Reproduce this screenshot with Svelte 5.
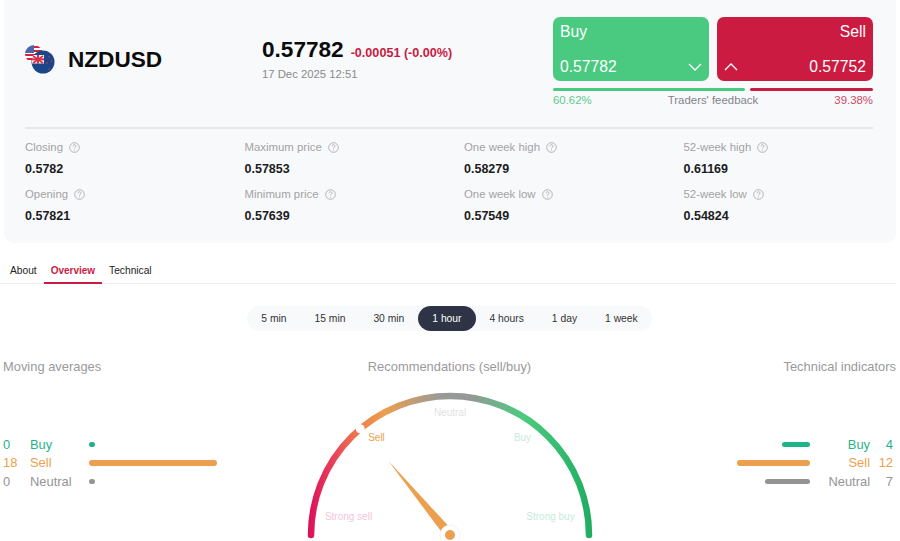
<script lang="ts">
  const stats = [
    { label: "Closing", value: "0.5782" },
    { label: "Maximum price", value: "0.57853" },
    { label: "One week high", value: "0.58279" },
    { label: "52-week high", value: "0.61169" },
    { label: "Opening", value: "0.57821" },
    { label: "Minimum price", value: "0.57639" },
    { label: "One week low", value: "0.57549" },
    { label: "52-week low", value: "0.54824" },
  ];
  const tabs = ["About", "Overview", "Technical"];
  const periods = ["5 min", "15 min", "30 min", "1 hour", "4 hours", "1 day", "1 week"];
  const averages = [
    { key: "buy", label: "Buy", count: 0, width: 6 },
    { key: "sell", label: "Sell", count: 18, width: 128 },
    { key: "neutral", label: "Neutral", count: 0, width: 6 },
  ];
  const indicators = [
    { key: "buy", label: "Buy", count: 4, width: 28 },
    { key: "sell", label: "Sell", count: 12, width: 73 },
    { key: "neutral", label: "Neutral", count: 7, width: 45 },
  ];
</script>

<div class="page">
  <section class="card">
    <div class="head">
      <div class="symbol">
        <svg class="flag" width="30" height="30" viewBox="0 0 30 30" aria-hidden="true">
          <defs>
            <clipPath id="us-clip"><circle cx="9" cy="9" r="9" /></clipPath>
            <clipPath id="nz-clip"><circle cx="18" cy="17" r="11.5" /></clipPath>
          </defs>
          <g clip-path="url(#us-clip)">
            <rect width="18" height="18" fill="#fff" />
            <rect x="8" y="1" width="10" height="2" fill="#d8203a" />
            <rect x="8" y="5" width="10" height="2" fill="#d8203a" />
            <rect y="9" width="18" height="2" fill="#d8203a" />
            <rect y="13" width="18" height="2" fill="#d8203a" />
            <rect width="9" height="8" fill="#4a66ad" />
          </g>
          <g clip-path="url(#nz-clip)">
            <rect x="6" y="5" width="24" height="24" fill="#1b4788" />
            <rect x="7" y="10" width="12" height="8.5" fill="#f4f4f6" />
            <path d="M8 11l10 7M18 11L8 18" stroke="#d8304a" stroke-width="1.6" />
            <rect x="12" y="10" width="2" height="8.5" fill="#d8304a" />
            <rect x="7" y="13.3" width="12" height="2" fill="#d8304a" />
            <circle cx="24" cy="12" r="0.8" fill="#d8304a" />
            <circle cx="26.5" cy="16" r="0.8" fill="#d8304a" />
            <circle cx="22" cy="18" r="0.8" fill="#d8304a" />
            <circle cx="24" cy="24" r="0.8" fill="#d8304a" />
          </g>
        </svg>
        <span class="symbol-name">NZDUSD</span>
      </div>

      <div class="quote">
        <div class="quote-line">
          <span class="quote-price">0.57782</span>
          <span class="quote-change">-0.00051 (-0.00%)</span>
        </div>
        <div class="quote-date">17 Dec 2025 12:51</div>
      </div>

      <div class="trade">
        <div class="trade-buttons">
          <button type="button" class="trade-btn buy">
            <span class="trade-name">Buy</span>
            <span class="trade-row">
              <span>0.57782</span>
              <svg width="14" height="8" viewBox="0 0 14 8" aria-hidden="true">
                <path d="M1 1l6 6 6-6" fill="none" stroke="#fff" stroke-width="1.3" />
              </svg>
            </span>
          </button>
          <button type="button" class="trade-btn sell">
            <span class="trade-name">Sell</span>
            <span class="trade-row">
              <svg width="14" height="8" viewBox="0 0 14 8" aria-hidden="true">
                <path d="M1 7l6-6 6 6" fill="none" stroke="#fff" stroke-width="1.3" />
              </svg>
              <span>0.57752</span>
            </span>
          </button>
        </div>
        <div class="feedback-bars">
          <span class="feedback-buy"></span>
          <span class="feedback-sell"></span>
        </div>
        <div class="feedback-labels">
          <span class="pct-buy">60.62%</span>
          <span class="feedback-title">Traders' feedback</span>
          <span class="pct-sell">39.38%</span>
        </div>
      </div>
    </div>

    <div class="stats">
      {#each stats as stat (stat.label)}
        <div class="stat">
          <div class="stat-label">
            {stat.label}
            <svg width="11" height="11" viewBox="0 0 11 11" aria-hidden="true">
              <circle cx="5.5" cy="5.5" r="4.8" fill="none" stroke="#a3a3a3" stroke-width="0.8" />
              <path d="M4 4.3c0-2 3-2 3-.2 0 1.1-1.5 1.2-1.5 2.5" fill="none" stroke="#a3a3a3" stroke-width="0.8" />
              <circle cx="5.5" cy="8" r="0.5" fill="#a3a3a3" />
            </svg>
          </div>
          <div class="stat-value">{stat.value}</div>
        </div>
      {/each}
    </div>
  </section>

  <nav class="tabs">
    {#each tabs as tab (tab)}
      <span class="tab" class:active={tab === "Overview"}>{tab}</span>
    {/each}
  </nav>

  <div class="periods-wrap">
    <div class="periods">
      {#each periods as period (period)}
        <span class="period" class:active={period === "1 hour"}>{period}</span>
      {/each}
    </div>
  </div>

  <section class="analysis">
    <div class="side">
      <h3 class="side-title">Moving averages</h3>
      <div class="rows">
        {#each averages as row (row.key)}
          <div class="row left {row.key}">
            <span class="row-count">{row.count}</span>
            <span class="row-label">{row.label}</span>
            <span class="row-bar" style="width: {row.width}px"></span>
          </div>
        {/each}
      </div>
    </div>

    <div class="center">
      <h3 class="side-title">Recommendations (sell/buy)</h3>
      <svg class="gauge" width="300" height="153" viewBox="0 0 300 153" role="img" aria-label="Recommendation gauge">
        <defs>
          <linearGradient id="gauge-arc" gradientUnits="userSpaceOnUse" x1="8" y1="0" x2="292" y2="0">
            <stop offset="0" stop-color="#dc0f5a" />
            <stop offset="0.09" stop-color="#e9415a" />
            <stop offset="0.18" stop-color="#ee7d4e" />
            <stop offset="0.27" stop-color="#ec9f4e" />
            <stop offset="0.47" stop-color="#999999" />
            <stop offset="0.57" stop-color="#959896" />
            <stop offset="0.76" stop-color="#4ccb80" />
            <stop offset="1" stop-color="#1fad5f" />
          </linearGradient>
        </defs>
        <path
          d="M11 147 A139 139 0 0 1 289 147"
          fill="none"
          stroke="url(#gauge-arc)"
          stroke-width="6.5"
          stroke-linecap="round"
        />
        <circle cx="60.2" cy="40.7" r="4.5" fill="#fff" />
        <text x="150" y="28" text-anchor="middle" class="g-label" fill="#e2e2e2">Neutral</text>
        <text x="76.5" y="53" text-anchor="middle" class="g-label" fill="#ec9f4e">Sell</text>
        <text x="222.5" y="53" text-anchor="middle" class="g-label" fill="#c8ebdf">Buy</text>
        <text x="48.5" y="132" text-anchor="middle" class="g-label" fill="#f6c5da">Strong sell</text>
        <text x="250.5" y="132" text-anchor="middle" class="g-label" fill="#c5ecdc">Strong buy</text>
        <path d="M88.5 73 L153.8 143.8 L146.2 150.2 Z" fill="#ec9f4e" />
        <circle cx="150" cy="147" r="10" fill="#fff" stroke="#eeeeee" stroke-width="0.8" />
        <circle cx="150" cy="147" r="5" fill="#ec9f4e" />
      </svg>
    </div>

    <div class="side side-right">
      <h3 class="side-title">Technical indicators</h3>
      <div class="rows">
        {#each indicators as row (row.key)}
          <div class="row right {row.key}">
            <span class="row-bar" style="width: {row.width}px"></span>
            <span class="row-label">{row.label}</span>
            <span class="row-count">{row.count}</span>
          </div>
        {/each}
      </div>
    </div>
  </section>
</div>

<style>
  :global(body) {
    margin: 0;
    background: #fff;
  }
  .page {
    height: 541px;
    overflow: hidden;
    font-family: "Liberation Sans", Arial, sans-serif;
    color: #111;
  }
  .card {
    box-sizing: border-box;
    height: 243px;
    margin: 0 4px;
    padding: 17px 23px 0 21px;
    background: #f8f9fb;
    border-radius: 0 0 10px 10px;
  }
  .head {
    display: flex;
    height: 110px;
    border-bottom: 2px solid #e6e8ea;
  }
  .symbol {
    display: flex;
    align-items: center;
    width: 237px;
    height: 86px;
    flex-shrink: 0;
  }
  .flag {
    flex-shrink: 0;
    margin-right: 13px;
  }
  .symbol-name {
    font-size: 22.6px;
    font-weight: 700;
    color: #0b0b0b;
  }
  .quote {
    width: 291px;
    flex-shrink: 0;
    padding-top: 19px;
  }
  .quote-line {
    display: flex;
    align-items: baseline;
    gap: 7px;
  }
  .quote-price {
    font-size: 22.6px;
    font-weight: 700;
    line-height: 28px;
    color: #0b0b0b;
  }
  .quote-change {
    font-size: 12.6px;
    font-weight: 700;
    color: #cb1a41;
  }
  .quote-date {
    margin-top: 3px;
    font-size: 11.3px;
    line-height: 14px;
    color: #8a8a8a;
  }
  .trade {
    width: 320px;
  }
  .trade-buttons {
    display: flex;
    gap: 8px;
  }
  .trade-btn {
    display: flex;
    flex-direction: column;
    justify-content: space-between;
    box-sizing: border-box;
    width: 156px;
    height: 64px;
    padding: 5px 7px 4px;
    border: 0;
    border-radius: 7px;
    color: #fff;
    font: inherit;
    font-size: 15.7px;
    line-height: 20px;
    cursor: pointer;
  }
  .trade-btn.buy {
    background: #4aca80;
    text-align: left;
  }
  .trade-btn.sell {
    background: #cc1b41;
    text-align: right;
  }
  .trade-row {
    display: flex;
    align-items: center;
    justify-content: space-between;
  }
  .feedback-bars {
    display: flex;
    gap: 5px;
    margin-top: 7px;
  }
  .feedback-bars span {
    display: block;
    height: 3px;
    border-radius: 2px;
  }
  .feedback-buy {
    width: 192px;
    background: #4aca80;
  }
  .feedback-sell {
    flex: 1;
    background: #cc1b41;
  }
  .feedback-labels {
    display: flex;
    justify-content: space-between;
    margin-top: 2px;
    font-size: 11.4px;
    line-height: 14px;
  }
  .pct-buy {
    color: #5fcb90;
  }
  .feedback-title {
    color: #808489;
  }
  .pct-sell {
    color: #cf4a68;
  }
  .stats {
    display: grid;
    grid-template-columns: repeat(4, 219.5px);
    row-gap: 9px;
    padding-top: 10px;
  }
  .stat-label {
    display: flex;
    align-items: center;
    gap: 6px;
    height: 16px;
    font-size: 11.4px;
    color: #a3a3a3;
  }
  .stat-value {
    margin-top: 6px;
    font-size: 12.5px;
    font-weight: 700;
    line-height: 16px;
    color: #1c1c1e;
  }
  .tabs {
    display: flex;
    box-sizing: border-box;
    height: 41px;
    padding: 16px 0 0 3px;
    margin: 0 4px 0 0;
    border-bottom: 1px solid #eeeeee;
  }
  .tab {
    box-sizing: border-box;
    height: 25px;
    padding: 5px 7px 0;
    font-size: 10.2px;
    line-height: 13px;
    color: #222;
  }
  .tab.active {
    font-size: 10px;
    color: #cc1b41;
    font-weight: 700;
    border-bottom: 2px solid #cc1b41;
  }
  .periods-wrap {
    display: flex;
    justify-content: center;
    margin-top: 22px;
    padding-right: 1px;
  }
  .periods {
    display: flex;
    height: 25px;
    background: #f8f9fb;
    border-radius: 13px;
  }
  .period {
    display: flex;
    align-items: center;
    height: 24px;
    padding: 0 14px;
    font-size: 10.3px;
    color: #333;
    border-radius: 13px;
  }
  .period.active {
    height: 25px;
    background: #2e3445;
    color: #fff;
  }
  .analysis {
    display: grid;
    grid-template-columns: 1fr 300px 1fr;
    margin-top: 28px;
    padding: 0 4px 0 3px;
  }
  .side-title {
    margin: 0;
    font-size: 12.9px;
    font-weight: 400;
    line-height: 16px;
    color: #9a9a9a;
  }
  .center {
    text-align: center;
  }
  .center .side-title {
    margin-bottom: 13px;
  }
  .gauge {
    display: block;
  }
  .g-label {
    font-size: 10px;
  }
  .side-right {
    text-align: right;
  }
  .rows {
    margin-top: 60px;
  }
  .row {
    display: flex;
    align-items: center;
    height: 18.5px;
    font-size: 12.9px;
  }
  .row.right {
    justify-content: flex-end;
    padding-right: 3px;
  }
  .row.left .row-count {
    width: 27px;
  }
  .row.left .row-label {
    width: 59px;
  }
  .row.right .row-label {
    width: 60px;
    text-align: right;
  }
  .row.right .row-count {
    width: 23px;
    text-align: right;
  }
  .row-bar {
    display: block;
    height: 5.5px;
    border-radius: 3px;
  }
  .row.buy {
    color: #1fb388;
  }
  .row.sell {
    color: #ec9f4e;
  }
  .row.neutral {
    color: #949494;
  }
  .row.buy .row-bar {
    background: #1fb388;
  }
  .row.sell .row-bar {
    background: #ec9f4e;
  }
  .row.neutral .row-bar {
    background: #949494;
  }
</style>
